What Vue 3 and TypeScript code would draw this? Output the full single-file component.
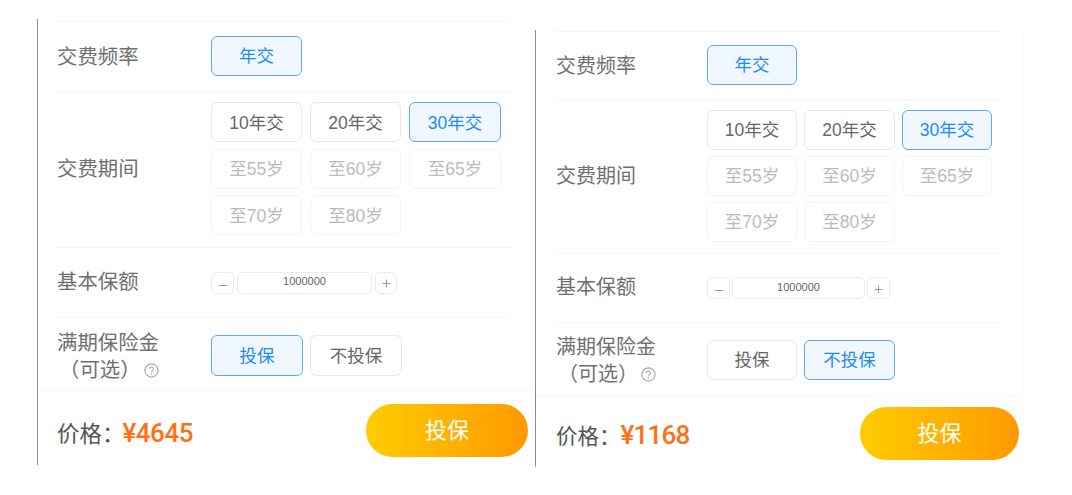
<script setup lang="ts">
interface Opt { text: string; active?: boolean; disabled?: boolean }
interface Panel {
  key: string
  freq: Opt[]
  period: Opt[]
  maturity: Opt[]
  price: string
  amount: string
}
const years = ['10年交', '20年交']
const ages = ['至55岁', '至60岁', '至65岁', '至70岁', '至80岁']
const period: Opt[] = [
  ...years.map((text) => ({ text })),
  { text: '30年交', active: true },
  ...ages.map((text) => ({ text, disabled: true })),
]
const panels: Panel[] = [
  {
    key: 'a',
    freq: [{ text: '年交', active: true }],
    period,
    maturity: [{ text: '投保', active: true }, { text: '不投保' }],
    price: '¥4645',
    amount: '1000000',
  },
  {
    key: 'b',
    freq: [{ text: '年交', active: true }],
    period,
    maturity: [{ text: '投保' }, { text: '不投保', active: true }],
    price: '¥1168',
    amount: '1000000',
  },
]
</script>

<template>
  <div class="page">
    <section v-for="p in panels" :key="p.key" class="panel" :class="'panel-' + p.key">
      <div class="body">
        <div class="row row-freq">
          <div class="label">交费频率</div>
          <div class="opts">
            <button v-for="o in p.freq" :key="o.text" class="opt" :class="{ active: o.active, disabled: o.disabled }">{{ o.text }}</button>
          </div>
        </div>
        <div class="row row-period">
          <div class="label">交费期间</div>
          <div class="opts">
            <button v-for="o in p.period" :key="o.text" class="opt" :class="{ active: o.active, disabled: o.disabled }">{{ o.text }}</button>
          </div>
        </div>
        <div class="row row-amount">
          <div class="label">基本保额</div>
          <div class="stepper">
            <button class="step" aria-label="减少">
              <svg width="8" height="8" viewBox="0 0 8 8"><path d="M0 6.5h8" stroke="#999" stroke-width="1" fill="none" /></svg>
            </button>
            <div class="amount">{{ p.amount }}</div>
            <button class="step step-plus" aria-label="增加">
              <svg width="9" height="9" viewBox="0 0 9 9"><path d="M0.5 5.5h8M4.5 1.5v8" stroke="#999" stroke-width="1" fill="none" /></svg>
            </button>
          </div>
        </div>
        <div class="row row-maturity">
          <div class="label two-line">
            <div>满期保险金</div>
            <div class="optional">
              <span>（可选）</span>
              <svg class="help" width="15" height="15" viewBox="0 0 15 15">
                <circle cx="7.5" cy="7.5" r="6.6" fill="none" stroke="#aaa" stroke-width="1.2" />
                <path d="M5.5 5.9a2 2 0 1 1 3.1 1.7c-.7.4-1.1.8-1.1 1.6" fill="none" stroke="#aaa" stroke-width="1.1" />
                <circle cx="7.5" cy="11" r=".75" fill="#aaa" />
              </svg>
            </div>
          </div>
          <div class="opts">
            <button v-for="o in p.maturity" :key="o.text" class="opt" :class="{ active: o.active, disabled: o.disabled }">{{ o.text }}</button>
          </div>
        </div>
      </div>
      <footer class="footer">
        <div class="price"><span class="price-label">价格：</span><span class="price-value">{{ p.price }}</span></div>
        <button class="buy">投保</button>
      </footer>
    </section>
  </div>
</template>

<style>
html, body { margin: 0; background: #fff; }
</style>

<style scoped>
.page {
  display: flex;
  align-items: flex-start;
  width: 1072px;
  height: 495px;
  padding-left: 37px;
  box-sizing: border-box;
  font-family: "Liberation Sans", "Noto Sans CJK SC", sans-serif;
  color: #666;
  overflow: hidden;
}
.panel {
  display: flex;
  flex-direction: column;
  border-left: 1px solid #8f8f8f;
  box-sizing: border-box;
}
.panel-a {
  --pad: 19px;
  --rule: 453px;
  --label: 154px;
  --col1: 91px;
  --col2: 91px;
  --col3: 92px;
  --opt-h: 40px;
  --gap-x: 8px;
  --gap-y: 6.5px;
  --row1: 70px;
  --row2: 156px;
  --row3: 70px;
  --row4: 75px;
  --amount: 135px;
  --step-gap: 3px;
  --plus: 22px;
  --label-size: 20.4px;
  --footer-top: 4px;
  margin-top: 19px;
  width: 498px;
  height: 446px;
  padding-top: 2px;
}
.panel-b {
  --pad: 20px;
  --rule: 445px;
  --label: 151px;
  --col1: 90px;
  --col2: 91px;
  --col3: 90px;
  --opt-h: 40px;
  --gap-x: 7px;
  --gap-y: 6px;
  --row1: 68px;
  --row2: 154px;
  --row3: 69px;
  --row4: 76px;
  --amount: 133px;
  --step-gap: 2px;
  --plus: 23px;
  --label-size: 20px;
  --footer-top: 2px;
  margin-top: 30px;
  width: 489px;
  height: 437px;
  padding-top: 1px;
}
.body {
  flex: none;
  padding-left: var(--pad);
  border-right: 1px solid #fafafa;
}
.row {
  display: grid;
  grid-template-columns: var(--label) 1fr;
  align-items: center;
  width: var(--rule);
  box-sizing: border-box;
  border-top: 1.5px solid #f4f4f4;
}
.row-freq { height: var(--row1); }
.row-period { height: var(--row2); }
.row-amount { height: var(--row3); }
.row-maturity { height: var(--row4); border-top-width: 1px; }
.label {
  font-size: var(--label-size);
  line-height: 27px;
  color: #707070;
  white-space: nowrap;
}
.row-freq .label { padding-top: 2px; }
.row-maturity .label { padding-top: 3px; }
.panel-b .row-maturity .label { padding-top: 1px; }
.panel-b .row-amount .label { padding-bottom: 2px; }
.optional {
  display: flex;
  align-items: center;
  gap: 3px;
  padding-left: 2px;
}
.help { flex: none; }
.opts {
  display: grid;
  grid-template-columns: var(--col1) var(--col2) var(--col3);
  column-gap: var(--gap-x);
  row-gap: var(--gap-y);
}
.row-freq .opts,
.row-period .opts,
.panel-b .row-maturity .opts { margin-bottom: 2px; }
.panel-a .row-maturity .opts { grid-template-columns: 92px 92px; column-gap: 7px; }
.opt {
  height: var(--opt-h);
  padding: 0 0 2px;
  background: #fff;
  border: 1px solid #e8e8e8;
  border-radius: 6px;
  font: inherit;
  font-size: 17.5px;
  color: #666;
  box-sizing: border-box;
}
.panel-a .row-maturity .opt { height: 41px; }
.opt.active {
  background: #f0f7ff;
  border-color: #5ea8ff;
  color: #1b8bff;
}
.opt.disabled {
  border-color: #f3f3f3;
  color: #bbb;
}
.stepper {
  display: flex;
  gap: var(--step-gap);
  align-items: stretch;
  height: 22px;
}
.step {
  flex: none;
  width: 23px;
  padding: 0;
  display: flex;
  align-items: center;
  justify-content: center;
  background: #fff;
  border: 1px solid #ebebeb;
  border-radius: 5px;
  box-sizing: border-box;
}
.step-plus { width: var(--plus); }
.amount {
  flex: none;
  width: var(--amount);
  border: 1px solid #ebebeb;
  border-radius: 5px;
  box-sizing: border-box;
  font-size: 11px;
  line-height: 17px;
  text-align: center;
  color: #666;
}
.panel-b .amount { line-height: 18px; }
.footer {
  flex: 1;
  position: relative;
  display: flex;
  align-items: center;
  justify-content: space-between;
  padding-left: var(--pad);
  padding-right: 7px;
  padding-top: var(--footer-top);
  box-shadow: 0 -3px 6px rgba(0, 0, 0, 0.025);
  background: #fff;
}
.panel-b .footer { padding-right: 5px; }
.price {
  display: flex;
  align-items: baseline;
  padding-top: 2px;
}
.price-label {
  font-size: 22.5px;
  color: #555;
}
.panel-b .price-label { font-size: 21.5px; }
.price-value {
  margin-left: -2px;
  font-family: Roboto, "Liberation Sans", sans-serif;
  font-size: 26px;
  font-weight: 500;
  letter-spacing: -0.5px;
  color: #ff7015;
}
.panel-b .price-value { margin-left: 0; letter-spacing: -0.8px; }
.buy {
  width: 162px;
  height: 53px;
  padding: 0 0 6px;
  border: 0;
  border-radius: 27px;
  background: linear-gradient(90deg, #ffcc00, #ff9900);
  color: #fff;
  font: inherit;
  font-size: 22px;
}
.panel-b .buy { width: 159px; }
</style>
